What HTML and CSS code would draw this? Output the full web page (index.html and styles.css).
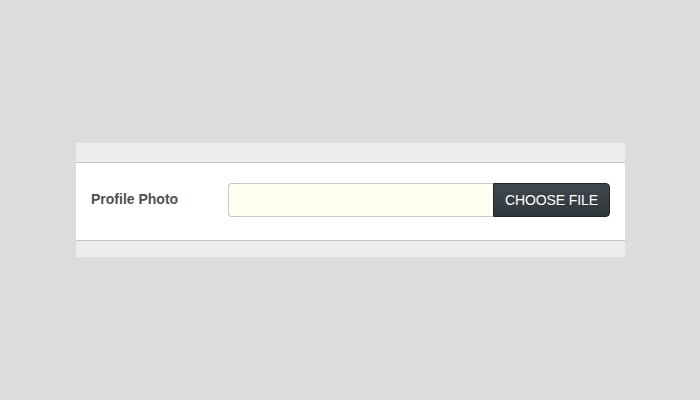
FILE: index.html
```html
<!DOCTYPE html>
<html>
<head>
<meta charset="utf-8">
<link rel="stylesheet" href="styles.css">
</head>
<body>
<div class="stage">
  <div class="panel">
    <div class="strip strip-top"></div>
    <div class="row">
      <label class="label">Profile Photo</label>
      <div class="file">
        <div class="file-input"></div>
        <div class="file-btn">CHOOSE FILE</div>
      </div>
    </div>
    <div class="strip strip-bottom"></div>
  </div>
</div>
</body>
</html>
```
FILE: styles.css
```css
html, body {
  margin: 0;
  padding: 0;
  background: #dcdcdc;
  font-family: "Liberation Sans", Arial, sans-serif;
}
.stage {
  width: 700px;
  height: 400px;
  padding: 143px 0 0 76px;
  box-sizing: border-box;
}
.panel {
  width: 549px;
  display: flex;
  flex-direction: column;
}
.strip {
  background: #ededed;
}
.strip-top {
  height: 19px;
  border-bottom: 1px solid #c6c6c6;
}
.strip-bottom {
  height: 16px;
  border-top: 1px solid #c6c6c6;
}
.row {
  background: #ffffff;
  height: 77px;
  box-sizing: border-box;
  display: flex;
  align-items: flex-start;
  padding: 20px 0 0 15px;
}
.label {
  width: 137px;
  font-size: 14px;
  line-height: 16px;
  font-weight: bold;
  color: #505050;
  margin-top: 8px;
}
.file {
  display: flex;
  height: 34px;
}
.file-input {
  width: 265px;
  box-sizing: border-box;
  background: #fefff0;
  border: 1px solid #c8c8c8;
  border-right: none;
  border-radius: 4px 0 0 4px;
}
.file-btn {
  width: 117px;
  box-sizing: border-box;
  background: linear-gradient(#3f484e, #2e363b);
  border: 1px solid #1e2427;
  border-radius: 0 4px 4px 0;
  color: #ffffff;
  font-size: 14px;
  display: flex;
  align-items: center;
  justify-content: center;
  letter-spacing: -0.1px;
}
```
